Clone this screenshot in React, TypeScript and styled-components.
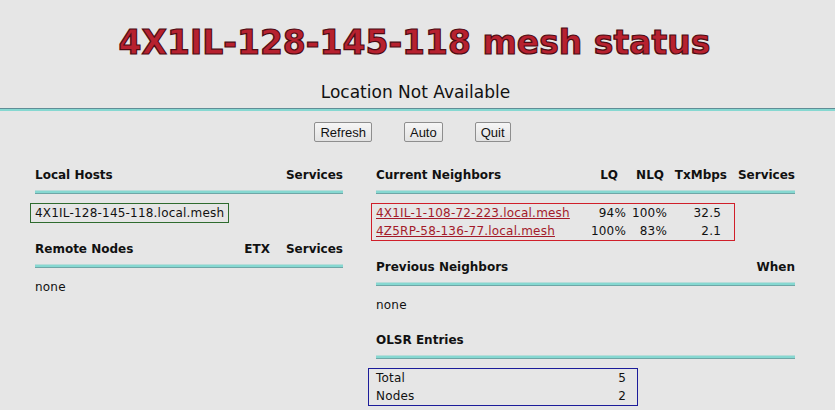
import { createGlobalStyle, styled } from "styled-components";

const GlobalStyle = createGlobalStyle`
  html, body {
    margin: 0;
    padding: 0;
    background: #e6e6e6;
  }
  body {
    font-family: "DejaVu Sans", Verdana, sans-serif;
    font-size: 12px;
    letter-spacing: 0.2px;
    color: #111;
  }
`;

const Page = styled.div`
  width: 835px;
  height: 410px;
  overflow: hidden;
`;

const Title = styled.h1`
  margin: 23px 0 0;
  height: 40px;
  line-height: 40px;
  text-align: center;
  font-size: 33px;
  font-weight: bold;
  letter-spacing: 0;
  color: #b7212f;
  -webkit-text-stroke: 1.2px #4d0b12;
  padding-right: 6px;
`;

const Location = styled.div`
  margin-top: 19px;
  line-height: 20px;
  text-align: center;
  font-size: 17px;
  letter-spacing: 0;
  padding-right: 4px;
`;

const TopRule = styled.div`
  margin-top: 6px;
  height: 2px;
  border-top: 1px solid #5f8d96;
  background: #86d8d1;
`;

const Toolbar = styled.div`
  margin-top: 11px;
  display: flex;
  justify-content: center;
  gap: 32px;
  padding-right: 10px;
`;

const Button = styled.button`
  height: 20px;
  padding: 0 5px;
  border: 1px solid #8e8e8e;
  border-radius: 2px;
  background: linear-gradient(#f6f6f6, #e2e2e2);
  font-family: "Liberation Sans", Arial, sans-serif;
  font-size: 13px;
  letter-spacing: 0;
  color: #111;
`;

const Columns = styled.div`
  margin-top: 24px;
  display: flex;
  gap: 33px;
  padding-left: 35px;
`;

const Column = styled.div<{ $width: number }>`
  width: ${(p) => p.$width}px;
  display: flex;
  flex-direction: column;
`;

const Section = styled.div`
  margin-bottom: 17px;
`;

const Heading = styled.div`
  display: flex;
  line-height: 18px;
  font-weight: bold;
  letter-spacing: 0;
`;

const HeadName = styled.span`
  flex: 1;
`;

const HeadCell = styled.span<{ $w: number }>`
  width: ${(p) => p.$w}px;
  text-align: right;
`;

const Rule = styled.div`
  margin: 6px 0 10px;
  height: 2px;
  border-top: 1px solid #b8dcd9;
  border-bottom: 1px solid #6fa6a6;
  background: #86d8d1;
`;

const Box = styled.div<{ $color: string; $left: number; $width?: number }>`
  border: 1px solid ${(p) => p.$color};
  margin-top: -1px;
  margin-left: -${(p) => p.$left}px;
  padding-left: ${(p) => p.$left - 1}px;
  width: ${(p) => (p.$width ? `${p.$width}px` : "fit-content")};
  box-sizing: border-box;
`;

const Line = styled.div`
  line-height: 18px;
  padding-right: 4px;
`;

const NeighborRow = styled.div`
  display: grid;
  grid-template-columns: 210px 40px 41px 54px;
  padding-right: 13px;
  line-height: 18px;
`;

const Num = styled.span`
  text-align: right;
`;

const HostLink = styled.a`
  color: #a31a2a;
  text-decoration: underline;
`;

const EntryRow = styled.div`
  display: flex;
  justify-content: space-between;
  line-height: 18px;
  padding-right: 11px;
`;

const neighbors = [
  { name: "4X1IL-1-108-72-223.local.mesh", lq: "94%", nlq: "100%", tx: "32.5" },
  { name: "4Z5RP-58-136-77.local.mesh", lq: "100%", nlq: "83%", tx: "2.1" },
];

export default function App() {
  return (
    <Page>
      <GlobalStyle />
      <Title>4X1IL-128-145-118 mesh status</Title>
      <Location>Location Not Available</Location>
      <TopRule />
      <Toolbar>
        <Button>Refresh</Button>
        <Button>Auto</Button>
        <Button>Quit</Button>
      </Toolbar>
      <Columns>
        <Column $width={308}>
          <Section>
            <Heading>
              <HeadName>Local Hosts</HeadName>
              <HeadCell $w={70}>Services</HeadCell>
            </Heading>
            <Rule />
            <Box $color="#2e6b2e" $left={5}>
              <Line>4X1IL-128-145-118.local.mesh</Line>
            </Box>
          </Section>
          <Section>
            <Heading>
              <HeadName>Remote Nodes</HeadName>
              <HeadCell $w={40}>ETX</HeadCell>
              <HeadCell $w={73}>Services</HeadCell>
            </Heading>
            <Rule />
            <Line>none</Line>
          </Section>
        </Column>
        <Column $width={419}>
          <Section>
            <Heading>
              <HeadName>Current Neighbors</HeadName>
              <HeadCell $w={30}>LQ</HeadCell>
              <HeadCell $w={46}>NLQ</HeadCell>
              <HeadCell $w={63}>TxMbps</HeadCell>
              <HeadCell $w={68}>Services</HeadCell>
            </Heading>
            <Rule />
            <Box $color="#d01f2a" $left={5}>
              {neighbors.map((n) => (
                <NeighborRow key={n.name}>
                  <span>
                    <HostLink href="#">{n.name}</HostLink>
                  </span>
                  <Num>{n.lq}</Num>
                  <Num>{n.nlq}</Num>
                  <Num>{n.tx}</Num>
                </NeighborRow>
              ))}
            </Box>
          </Section>
          <Section>
            <Heading>
              <HeadName>Previous Neighbors</HeadName>
              <HeadCell $w={60}>When</HeadCell>
            </Heading>
            <Rule />
            <Line>none</Line>
          </Section>
          <Section>
            <Heading>
              <HeadName>OLSR Entries</HeadName>
            </Heading>
            <Rule />
            <Box $color="#1c1c9a" $left={8} $width={270}>
              <EntryRow>
                <span>Total</span>
                <span>5</span>
              </EntryRow>
              <EntryRow>
                <span>Nodes</span>
                <span>2</span>
              </EntryRow>
            </Box>
          </Section>
        </Column>
      </Columns>
    </Page>
  );
}
